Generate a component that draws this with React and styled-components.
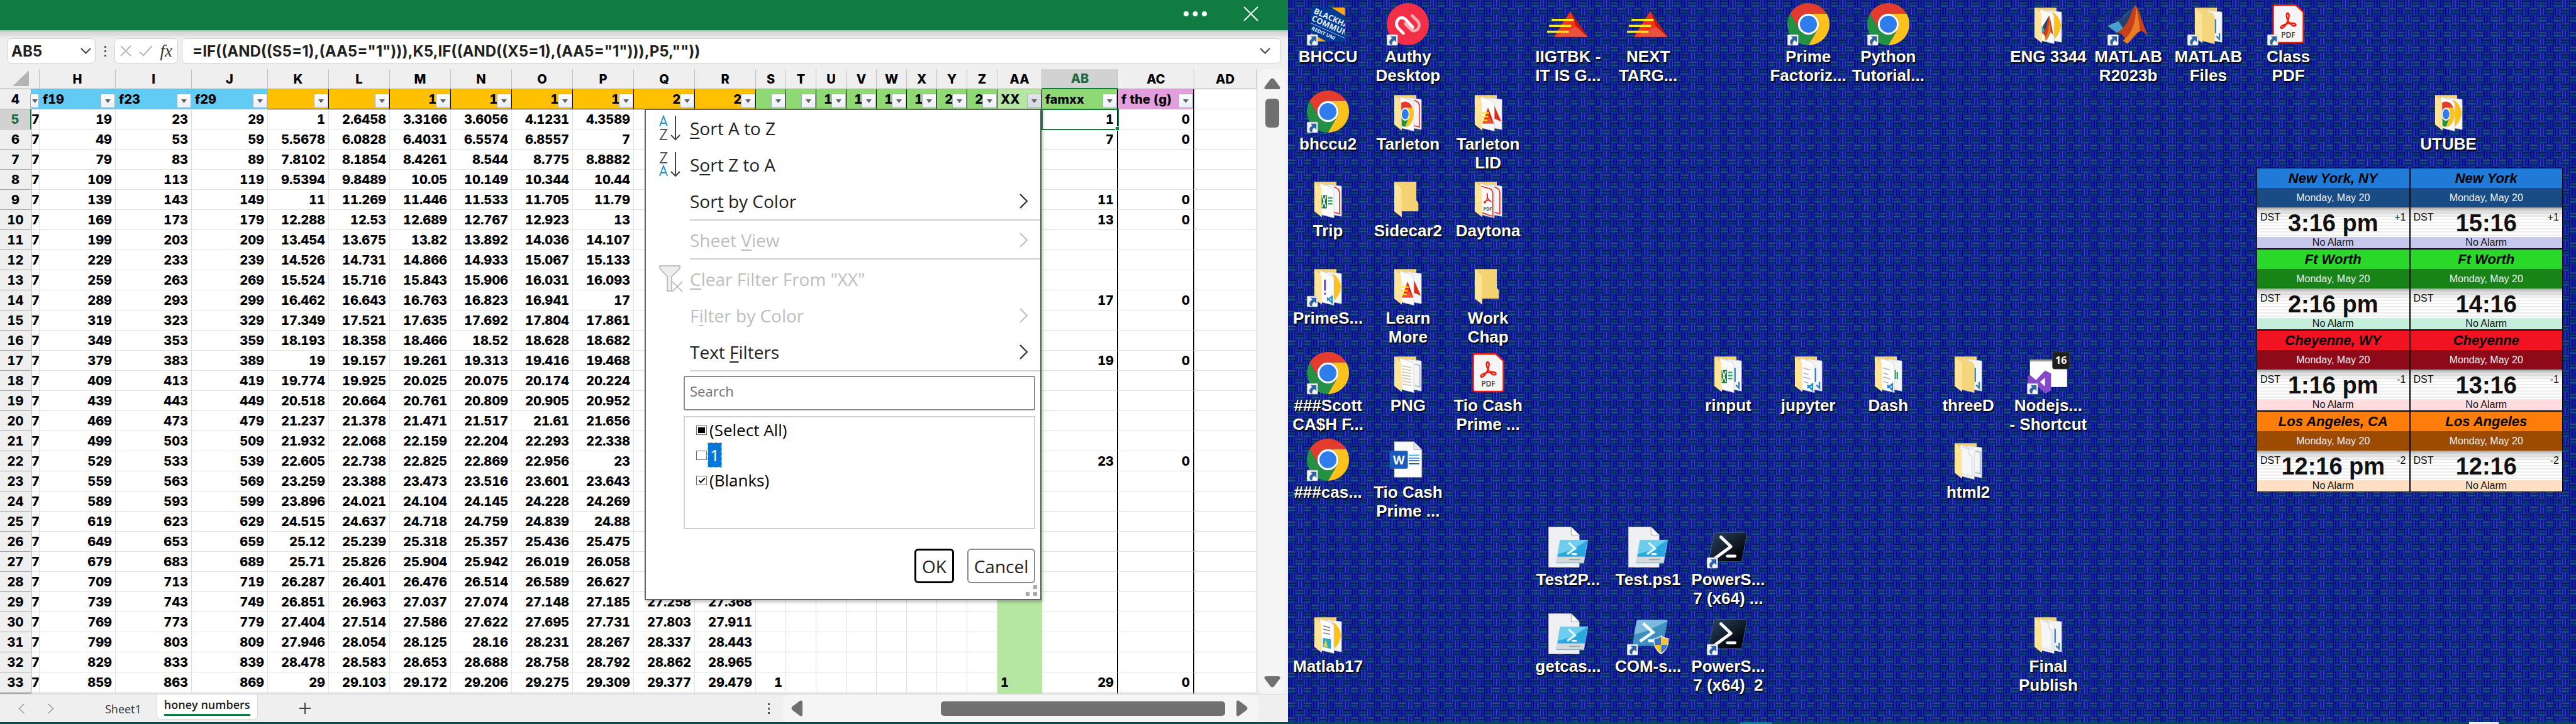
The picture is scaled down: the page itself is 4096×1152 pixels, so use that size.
import React from 'react';
import styled, { createGlobalStyle, css } from 'styled-components';

const UI = '"Open Sans", "Noto Sans", sans-serif';
const SHEET = 'Inter, "Liberation Sans", sans-serif';
const ARIAL = '"Liberation Sans", Arial, sans-serif';

const weave = (() => {
  const lines = [];
  for (let i = 0; i < 5; i += 1) {
    lines.push(`<path d='M${2 + i * 3} 0v15M${17.5 + i * 3} 15v15' stroke='#3264be'/>`);
    lines.push(`<path d='M16 ${1.5 + i * 3}h15M0 ${16.5 + i * 3}h15' stroke='#236eb4'/>`);
  }
  const svg = `<svg xmlns='http://www.w3.org/2000/svg' viewBox='0 0 31 30' width='31' height='30' preserveAspectRatio='none'><rect width='31' height='30' fill='#000084'/><path d='M16 1h14v13h-14zM1 16h14v13h-14z' fill='#001458'/>${lines.join('')}</svg>`;
  return `url("data:image/svg+xml,${encodeURIComponent(svg)}")`;
})();

const GlobalStyle = createGlobalStyle`
  *, *::before, *::after { box-sizing: border-box; }
  body { margin: 0; font-family: ${UI}; }
  button, input { font: inherit; color: inherit; }
  button { padding: 0; border: 0; background: none; }
  input { margin: 0; }
`;

const Screen = styled.div`
  display: flex;
  flex-direction: column;
  min-height: 100vh;
  overflow: hidden;
`;
const Workspace = styled.div`
  display: flex;
  flex: 1;
`;

/* ---------- spreadsheet window ---------- */
const Window = styled.section`
  flex: 0 0 50%;
  min-width: 0;
  display: flex;
  flex-direction: column;
  background: #efefef;
`;
const TitleBar = styled.header`
  height: 48px;
  background: #107c41;
  display: flex;
  align-items: center;
  justify-content: flex-end;
  gap: 58px;
  padding: 0 47px 4px 0;
`;
const PlainButton = styled.button`
  display: flex;
  align-items: center;
  justify-content: center;
`;
const FormulaBar = styled.div`
  height: 62px;
  padding: 11px 11px 9px;
  border-top: 2px solid #8fd3ae;
  background: linear-gradient(#d2d2d2, #efefef 12px);
  display: flex;
  align-items: stretch;
  font: 700 24px ${SHEET};
  color: #222;
`;
const BarBox = styled.div`
  background: #fff;
  border: 1px solid #d0d0d0;
  border-radius: 7px;
  display: flex;
  align-items: center;
  ${(p) => (p.$grow ? 'flex: 1; min-width: 0;' : `width: ${p.$w}px;`)}
  padding: 0 ${(p) => p.$pad || 8}px;
  gap: 12px;
  justify-content: space-between;
`;
const BarInput = styled.input`
  flex: 1;
  min-width: 0;
  border: 0;
  outline: 0;
  background: none;
  padding: 0;
`;
const Dots = styled.div`
  width: 30px;
  display: flex;
  flex-direction: column;
  align-items: center;
  justify-content: center;
  gap: 4px;
  &::before, &::after, & > i { content: ''; width: 3px; height: 3px; background: #555; }
`;
const Gap = styled.div`
  width: 6px;
`;
const Fx = styled.button`
  font: italic 27px "Liberation Serif", serif;
  color: #333;
`;

const Body = styled.div`
  display: flex;
`;
const GridArea = styled.div`
  flex: 1;
  min-width: 0;
`;
const Grid = styled.table`
  width: 100%;
  table-layout: fixed;
  border-collapse: separate;
  border-spacing: 0;
  background: #fff;
  font: 800 20px ${SHEET};
  font-variant-numeric: tabular-nums;
  line-height: 24px;
  color: #000;
`;
const Corner = styled.td`
  height: 32px;
  background: #efefef;
  border-bottom: 1px solid #999;
  padding: 0 4px 2px 0;
  text-align: right;
  svg { display: block; margin-left: auto; }
`;
const ColHead = styled.th`
  height: 32px;
  padding: 0;
  font-weight: 800;
  background: ${(p) => (p.$on ? '#d2d2d2' : '#efefef')};
  color: ${(p) => (p.$on ? '#1e6b42' : '#000')};
  border-right: 1px solid #c0c0c0;
  border-bottom: ${(p) => (p.$on ? '2px solid #107c41' : '1px solid #999')};
`;
const RowHead = styled.th`
  height: ${(p) => p.$h || 32}px;
  padding: 0;
  font-weight: 800;
  background: ${(p) => (p.$on ? '#d2d2d2' : '#efefef')};
  color: ${(p) => (p.$on ? '#1e6b42' : '#000')};
  border-bottom: 1px solid #a6a6a6;
  border-right: ${(p) => (p.$on ? '2px solid #107c41' : '1px solid #999')};
`;
const Cell = styled.td`
  position: relative;
  height: ${(p) => p.$h || 32}px;
  padding: 0 ${(p) => (p.$clip ? 0 : 5)}px;
  text-align: ${(p) => p.$align || 'right'};
  white-space: nowrap;
  ${(p) => p.$clip && 'overflow: hidden;'}
  background: ${(p) => p.$bg || '#fff'};
  border-right: ${(p) => (p.$rule ? '2px solid #000' : `1px solid ${p.$bg || '#e0e0e0'}`)};
  border-bottom: 1px solid ${(p) => p.$bg || '#e0e0e0'};
  ${(p) => p.$dark && css`
    padding-right: 9px;
    border-right: 1px solid #000;
    border-bottom: 1px solid #000;
  `}
  ${(p) => p.$selected && css`
    outline: 2px solid #107c41;
    outline-offset: -1px;
    z-index: 1;
    &::after {
      content: '';
      position: absolute;
      right: -4px;
      bottom: -3px;
      width: 7px;
      height: 7px;
      background: #107c41;
      border: 1px solid #fff;
    }
  `}
`;
const FilterButton = styled.button`
  position: absolute;
  right: 0;
  bottom: 1px;
  width: ${(p) => (p.$narrow ? 14 : 23)}px;
  height: 23px;
  border: 1px solid #a8acb4;
  background: ${(p) => (p.$open ? 'linear-gradient(#e4e6ea, #d4d8e4)' : 'linear-gradient(#fff, #e9edf5)')};
  display: flex;
  align-items: center;
  justify-content: center;
`;

/* ---------- filter menu ---------- */
const Menu = styled.div`
  position: absolute;
  z-index: 5;
  top: 31px;
  right: 0;
  width: 631px;
  background: #fff;
  border: 2px solid #646464;
  box-shadow: 2px 3px 5px rgba(0, 0, 0, 0.25);
  font: 400 28px/36px ${UI};
  text-align: left;
  color: #222;
`;
const Item = styled.button`
  width: 100%;
  height: 58px;
  display: grid;
  grid-template-columns: 70px 1fr 34px;
  align-items: center;
  text-align: left;
  color: ${(p) => (p.disabled ? '#bdbdbd' : '#222')};
  u { text-decoration-thickness: 2px; text-underline-offset: 4px; }
`;
const IconSlot = styled.span`
  display: flex;
  padding-left: 21px;
`;
const Divider = styled.hr`
  margin: 0 0 2px 70px;
  border: 0;
  height: 2px;
  background: #d0d0d0;
`;
const MenuBody = styled.div`
  padding: 5px 8px 25px 60px;
  display: flex;
  flex-direction: column;
`;
const Search = styled.input`
  height: 55px;
  border: 2px solid #8a8a8a;
  border-radius: 3px;
  padding: 0 8px 8px;
  font-size: 22px;
  outline: 0;
  &::placeholder { color: #707070; opacity: 1; }
`;
const Choices = styled.div`
  margin: 9px 0 31px;
  height: 180px;
  border: 2px solid #d0d0d0;
  padding: 0 0 0 18px;
  color: #000;
  font-size: 26px;
`;
const Choice = styled.label`
  height: 40px;
  display: flex;
  align-items: center;
  gap: 2px;
  span {
    line-height: 38px;
    padding: 0 2px;
    ${(p) => p.$hot && 'background: #0078d7; color: #fff; padding: 0 3px; outline: 1px dotted #d67a1c;'}
  }
`;
const Tick = styled.input.attrs({ type: 'checkbox' })`
  appearance: none;
  width: 17px;
  height: 15px;
  border: 1px solid #707070;
  background: #fff;
  display: grid;
  place-items: center;
  &:indeterminate::before { content: ''; width: 11px; height: 9px; background: #000; }
  &:checked::before {
    content: '';
    width: 10px;
    height: 5px;
    border: solid #000;
    border-width: 0 0 2px 2px;
    transform: translateY(-1px) rotate(-45deg);
  }
`;
const Actions = styled.div`
  display: flex;
  justify-content: flex-end;
  gap: 21px;
`;
const Action = styled.button`
  height: 55px;
  width: ${(p) => (p.$primary ? 63 : 108)}px;
  border: ${(p) => (p.$primary ? '3px solid #000' : '2px solid #8a8a8a')};
  border-radius: 6px;
`;
const Grip = styled.svg`
  position: absolute;
  right: 5px;
  bottom: 4px;
`;

/* ---------- scroll bars and tabs ---------- */
const VBar = styled.div`
  width: 43px;
  margin: 0 4px 0 3px;
  border-radius: 10px;
  background: #f5f5f5;
  display: flex;
  flex-direction: column;
  align-items: center;
  padding: 14px 0 10px;
`;
const VThumb = styled.div`
  margin: 15px 0 auto;
  width: 22px;
  height: 46px;
  border-radius: 6px;
  background: #707070;
`;
const Footer = styled.footer`
  flex: 1;
  min-height: 45px;
  display: flex;
  align-items: center;
  border-top: 1px solid #d4d4d4;
  font-size: 18px;
  line-height: 24px;
  color: #333;
`;
const Arrows = styled.div`
  display: flex;
  gap: 35px;
  padding: 0 69px 0 29px;
`;
const Tab = styled.button`
  height: 40px;
  align-self: flex-start;
  padding: 6px 12px 0;
  ${(p) => (p.$on
    ? css`
      background: #fff;
      border: 1px solid #d8d8d8;
      border-top: 0;
      border-radius: 0 0 6px 6px;
      font-weight: 600;
      display: flex;
      flex-direction: column;
      padding: 4px 11px 0;
      color: #222;
      &::after { content: ''; width: 100%; height: 3px; margin-top: 3px; background: #107c41; }
    `
    : css`margin-right: 12px;`)}
`;
const AddTab = styled.button`
  margin: 0 auto 0 66px;
  display: flex;
`;
const HBar = styled.div`
  width: 757px;
  margin: 0 46px 0 8px;
  align-self: stretch;
  border-radius: 10px;
  background: #f5f5f5;
  display: flex;
  align-items: center;
  justify-content: flex-end;
  gap: 18px;
  padding: 0 18px 0 13px;
`;
const HThumb = styled.div`
  margin-left: auto;
  width: 452px;
  height: 23px;
  border-radius: 5px;
  background: #707070;
`;

/* ---------- desktop ---------- */
const Desktop = styled.main`
  flex: 1;
  min-width: 0;
  background: #000080 ${weave} 0 0 / 25px 24px;
  display: grid;
  grid-template-columns: repeat(16, 1fr);
  grid-template-rows: repeat(8, 1fr);
  padding: 0 12px 40px 0;
`;
const Shortcut = styled.button`
  grid-column: ${(p) => p.$c};
  grid-row: ${(p) => p.$r};
  align-self: start;
  min-width: 0;
  height: 0;
  padding: 5px 0 0;
  display: flex;
  flex-direction: column;
  align-items: center;
  gap: 3px;
  font: 700 26px/30px ${ARIAL};
  color: #fff;
  text-shadow: 1px 2px 2px #000, 1px 1px 1px #000;
  svg { flex: none; overflow: visible; text-shadow: none; }
`;
const Line = styled.span`
  display: block;
  white-space: pre;
  text-align: center;
`;
const Clocks = styled.section`
  grid-column: 13 / 17;
  grid-row: 2 / 7;
  justify-self: end;
  align-self: start;
  margin: 128px 9px 0 0;
  width: 487px;
  padding: 1px;
  background: #000;
  display: grid;
  grid-template-columns: 1fr 1fr;
  gap: 2px;
  font: 400 16px/18px ${ARIAL};
  color: #111;
  text-align: center;
`;
const City = styled.h2`
  margin: 0;
  background: ${(p) => p.$bg};
  font: italic 700 22px/31px ${ARIAL};
  color: #000;
`;
const Day = styled.div`
  background: ${(p) => p.$bg};
  color: #f0f0f0;
  line-height: 31px;
`;
const Face = styled.div`
  height: 47px;
  display: grid;
  grid-template-columns: 32px 1fr 32px;
  padding: 7px 5px 0;
  background:
    linear-gradient(rgba(130, 130, 130, 0.8), rgba(170, 170, 170, 0.45) 4px, transparent 17px),
    repeating-linear-gradient(#fff 0 3px, #ededed 3px 5px);
`;
const Hour = styled.strong`
  font-size: 38px;
  line-height: 36px;
  white-space: nowrap;
  justify-self: center;
`;
const Shift = styled.span`
  text-align: right;
`;
const Alarm = styled.div`
  background: ${(p) => p.$bg};
`;

const Taskbar = styled.footer`
  height: 3px;
  background: #004d4d;
  display: grid;
  grid-template-columns: 2767fr 51fr 1108fr 47fr 123fr;
`;
const TaskMark = styled.span`
  grid-column: ${(p) => p.$c};
  background: ${(p) => p.$bg};
`;

/* ---------- drawings ---------- */
const ChromeArt = () => (
  <g>
    <path d="M5.6 21A42 42 0 0 1 78.4 21H42A21 21 0 0 0 23.8 52.5Z" fill="#e33b2e" />
    <path d="M78.4 21A42 42 0 0 1 42 84L60.2 52.5A21 21 0 0 0 42 21Z" fill="#fcc21b" />
    <path d="M42 84A42 42 0 0 1 5.6 21L23.8 52.5A21 21 0 0 0 60.2 52.5Z" fill="#239144" />
    <circle cx="42" cy="42" r="21" fill="#fff" />
    <circle cx="42" cy="42" r="17" fill="#2f7ded" />
  </g>
);
const LinkMark = () => (
  <g>
    <rect x="0.5" y="63" width="21" height="21" rx="1" fill="#f4f6f9" stroke="#b9c0c8" />
    <path d="M7 66h12v12l-4-4c-4 3-5 5-4 9h-3c-5-4-3-10 3-13z" fill="#2f62a3" />
  </g>
);
const LidArt = () => (
  <g>
    <path d="M46.500 16 81 67.500H13.500Z" fill="#f2331c" />
    <path d="M46.500 16 81 67.500 58 47Z" fill="#c01808" />
    <path d="M13.500 67.500 58 47 81 67.500Z" fill="#e8604c" opacity=".7" />
    <path d="M9 33.500h44M4 45.500h44M0 57h43" stroke="#f8ee14" strokeWidth="4.500" />
  </g>
);
const PdfArt = () => (
  <g>
    <path d="M15 4h42l15 14v57q0 4-4 4H16q-4 0-4-4V8q0-4 3-4z" fill="#f6f5f5" stroke="#fb1507" strokeWidth="3" strokeLinejoin="round" />
    <path d="M41 20c-4-1-3 9 1 16s10 11 14 9c4-3-3-6-11-5-9 1-19 6-18 9 2 4 9-3 13-11 4-9 5-17 1-18z" fill="none" stroke="#fb1507" strokeWidth="3" />
    <text x="42" y="69" textAnchor="middle" fontFamily="Open Sans, sans-serif" fontWeight="600" fontSize="15" fill="#333">PDF</text>
  </g>
);
const AuthyArt = () => (
  <g fill="none" strokeWidth="6" strokeLinecap="round">
    <circle cx="42" cy="42" r="42" fill="#f22f46" />
    <path d="M50.500 25 61 35C71 46 58 62 48 52L37 41" stroke="#f9a9b3" />
    <path d="M33 60 23 50C13 39 26 22 37 32L52 48" stroke="#fff" />
  </g>
);
const BankArt = () => (
  <g>
    <clipPath id="bank"><rect x="8" y="8.500" width="68" height="68" rx="3" /></clipPath>
    <g clipPath="url(#bank)">
      <rect x="8" y="8" width="69" height="69" fill="#003a94" />
      <path d="M48 8h29v18zM8 60v17h32z" fill="#f9a61a" />
      <g transform="rotate(24 8 20)" fill="#e8edf7" fontFamily="Open Sans, sans-serif">
        <text x="12" y="18" fontSize="16">BLACKHA</text>
        <text x="14" y="33" fontSize="16">COMMUN</text>
        <path d="M14 38h80" stroke="#c4d0e6" />
        <text x="22" y="50" fontSize="10">REDIT UNI</text>
      </g>
    </g>
  </g>
);
const MatlabArt = () => (
  <g>
    <path d="M0 45 22 36 36 22 56 5 44 34 30 52 18 59Z" fill="#4a9fcf" />
    <path d="M22 36 56 5 48 32 34 55Z" fill="#28406e" />
    <path d="M18 59c12-6 20-16 26-30 4-10 8-22 12-24 8 6 16 44 26 61-8-6-12-12-17-10-8 4-18 22-27 24-3-10-6-20-20-21z" fill="#c7401b" />
    <path d="M56 5c2 20-2 54-26 70 10 6 8 8 12 4 6-8 16-22 23-23-2-18-5-40-9-51z" fill="#f08a24" opacity=".85" />
  </g>
);
const WordArt = () => (
  <g>
    <path d="M15 6h39l16 16v55H15z" fill="#fbfbfb" stroke="#9a9a9a" />
    <path d="M54 6v16h16" fill="#e8e8e8" stroke="#9a9a9a" />
    <path d="M44 33h21M44 39h21" stroke="#41a5ee" strokeWidth="2" />
    <path d="M44 44h21M44 50h21" stroke="#185abd" strokeWidth="2" />
    <rect x="6" y="24" width="36" height="36" rx="3" fill="#185abd" />
    <text x="24" y="51" textAnchor="middle" fontFamily="Open Sans, sans-serif" fontWeight="700" fontSize="24" fill="#fff">W</text>
  </g>
);
const ScriptArt = () => (
  <g>
    <path d="M3 2h45l16 16v64H3z" fill="#f0f0f2" stroke="#cfcfcf" />
    <path d="M48 2v16h16" fill="#fff" stroke="#888" />
    <path d="M26 28h55l-8 46H18z" fill="#29a8e0" stroke="#8fd6f2" />
    <path d="M26 28h55L50 48 21 56z" fill="#7fd5f3" opacity=".8" />
    <path d="M20 61h55l-2 12H18z" fill="#d3d8dc" />
    <path d="M44 67h22" stroke="#9a9fa4" strokeWidth="2" />
    <path d="M43 33 56 45 40 56M49 56h10" fill="none" stroke="#e6f8ff" strokeWidth="4" />
  </g>
);
const ShellArt = () => (
  <g>
    <linearGradient id="shell" x1="0" y1="0" x2="1" y2="1">
      <stop offset="0" stopColor="#2c4564" /><stop offset=".8" stopColor="#03060a" />
    </linearGradient>
    <path d="M18 13h59q3 0 3 3l-10 52q-1 3-4 3H7q-3 0-3-3l10-52q1-3 4-3z" fill="url(#shell)" stroke="#4d6684" />
    <path d="M28 22 48 41 18 63M41 60h15" fill="none" stroke="#fff" strokeWidth="6" strokeLinecap="round" strokeLinejoin="round" />
  </g>
);
const AdminShellArt = () => (
  <g>
    <path d="M22 14h56q3 0 3 3l-9 46q-1 3-4 3H12q-2 0-1-3l8-46q1-3 3-3z" fill="#3f8fc0" />
    <path d="M22 14h56q3 0 3 3L40 36 14 44l5-27q1-3 3-3z" fill="#8cc6e4" opacity=".8" />
    <path d="M32 21 52 39 26 57M42 56h14" fill="none" stroke="#f2fbff" strokeWidth="6" />
    <path d="M68 45q8 6 15 5c1 14-3 25-15 33-12-8-16-19-15-33q8 1 15-5z" fill="#e8e8e8" />
    <path d="M68 48v16H56q-2-6-1-12 7 0 13-4zM68 64h13q-3 10-13 16z" fill="#3b74c4" />
    <path d="M68 48q6 4 13 4 1 6 0 12H68zM56 64h12v16Q58 74 56 64z" fill="#f7c231" />
  </g>
);
const StudioArt = () => (
  <g>
    <rect x="6" y="15" width="74" height="55" fill="#fdfdfd" />
    <rect x="6" y="15" width="74" height="4" fill="#9b9b9b" />
    <rect x="51" y="0" width="34" height="34" rx="4" fill="#1e1e1e" stroke="#444" />
    <text x="68" y="24" textAnchor="middle" fontFamily="Open Sans, sans-serif" fontWeight="700" fontSize="20" fill="#fff">16</text>
    <path d="M1 48 6 46 18 56 36 37 48 43V77L36 83 18 65 6 74 1 71ZM36 51 26 60 36 69Z" fill="#864ac9" fillRule="evenodd" />
  </g>
);

const DOCS = {
  chrome: <g transform="translate(20 22) scale(.4 .6)"><ChromeArt /></g>,
  pdf: (
    <g fill="none" stroke="#e8251d" strokeWidth="2">
      <path d="M28 18 48 24 51 30V78L30 71" />
      <path d="M40 32c-2 8 3 15 8 17M33 52c4-1 9-10 7-20M33 50q7-6 14-3" />
      <text x="32" y="66" fontFamily="Open Sans, sans-serif" fontSize="9" fill="#333" stroke="none">PDF</text>
    </g>
  ),
  lid: <g transform="translate(26 24) scale(.33 .62)"><LidArt /></g>,
  sheet: (
    <g>
      <rect x="27" y="36" width="13" height="26" fill="#107c41" />
      <path d="M42 41h9M42 47h9M42 53h9" stroke="#33a667" strokeWidth="3" />
      <path d="M30 35 38 60M38 38 30 60" stroke="#fff" strokeWidth="2" />
    </g>
  ),
  code: (
    <g>
      <path d="M36 30v22M36 56v4" stroke="#6f4fc4" strokeWidth="4" />
      <path d="M40 66 50 76V64L40 72" fill="none" stroke="#1f8ad2" strokeWidth="3" />
    </g>
  ),
  text: (
    <g>
      <path d="M32 32 46 36M32 42 42 45M32 50 46 54M32 59 42 62" stroke="#aab4bd" strokeWidth="2" />
      <path d="M40 66 50 76V64L40 72" fill="none" stroke="#1f8ad2" strokeWidth="3" />
    </g>
  ),
  page: <path d="M30 17 44 20V32L50 34V76L30 70" fill="#f4f6f9" stroke="#b8bdc9" />,
  photo: <path d="M31 28 49 31M31 34 49 37M31 40 49 43M31 46 49 49M31 52 49 55M31 58 49 61M31 64 49 67" stroke="#c9b98c" strokeWidth="2" strokeDasharray="3 1" />,
  matlab: <g transform="translate(24 22) scale(.36 .66)"><MatlabArt /></g>,
  plot: (
    <g>
      <path d="M33 26 46 30M33 33 46 36M33 40 46 43" stroke="#777" strokeWidth="2" />
      <path d="M32 50 48 53V72L32 68Z" fill="#2aa8c8" />
      <path d="M33 66 38 54 42 70Z" fill="#f2d13c" />
    </g>
  ),
  folder: <path d="M25 11 50 20 54 26V81L26 74Z" fill="#f5d67c" />,
};
const BACKS = {
  red: <path d="M54 19 63 24 65 30V73L54 70" fill="none" stroke="#e8251d" strokeWidth="2" />,
  chrome: <path d="M51 18q14 8 17 26-3 22-17 30z" fill="#fcc21b" />,
  lid: <path d="M54 30 68 62 54 56Z" fill="#e02c14" />,
  blue: <path d="M56 32v28M58 66 64 72V60" fill="none" stroke="#2c7fb8" strokeWidth="3" />,
  grey: <path d="M56 24 66 27V70L56 67" fill="none" stroke="#9fb3c0" strokeWidth="2" />,
  green: <path d="M56 36v18M60 40v14" stroke="#3a9c6a" strokeWidth="3" />,
};
const FolderArt = ({ front, back }) => (
  <g>
    <path d="M15 9H59V46L63 51V68H28Z" fill="#f5d272" />
    {back && <path d="M40 14 69 18V78L48 74Z" fill="#f3f4f6" stroke="#c9ccd2" />}
    {back && BACKS[back]}
    {front && <path d="M26 12 50 20 54 26V81L26 74Z" fill="#fbfbfc" stroke="#c9ccd2" />}
    {front && DOCS[front]}
    <path d="M15 9 29 22 30 80 15 68Z" fill="#ffe49a" />
  </g>
);

const ART = {
  chrome: ChromeArt, lid: LidArt, pdf: PdfArt, authy: AuthyArt, bank: BankArt, matlab: MatlabArt,
  word: WordArt, script: ScriptArt, shell: ShellArt, admin: AdminShellArt, studio: StudioArt, folder: FolderArt,
};

const SHORTCUTS = [
  { c: 1, r: 1, art: 'bank', link: true, label: ['BHCCU'] },
  { c: 2, r: 1, art: 'authy', link: true, label: ['Authy', 'Desktop'] },
  { c: 4, r: 1, art: 'lid', label: ['IIGTBK -', 'IT IS G...'] },
  { c: 5, r: 1, art: 'lid', label: ['NEXT', 'TARG...'] },
  { c: 7, r: 1, art: 'chrome', link: true, label: ['Prime', 'Factoriz...'] },
  { c: 8, r: 1, art: 'chrome', link: true, label: ['Python', 'Tutorial...'] },
  { c: 10, r: 1, art: 'folder', front: 'matlab', back: 'chrome', label: ['ENG 3344'] },
  { c: 11, r: 1, art: 'matlab', link: true, label: ['MATLAB', 'R2023b'] },
  { c: 12, r: 1, art: 'folder', front: 'folder', back: 'blue', link: true, label: ['MATLAB', 'Files'] },
  { c: 13, r: 1, art: 'pdf', link: true, label: ['Class', 'PDF'] },
  { c: 1, r: 2, art: 'chrome', link: true, label: ['bhccu2'] },
  { c: 2, r: 2, art: 'folder', front: 'chrome', back: 'red', label: ['Tarleton'] },
  { c: 3, r: 2, art: 'folder', front: 'lid', back: 'lid', label: ['Tarleton', 'LID'] },
  { c: 15, r: 2, art: 'folder', front: 'chrome', back: 'chrome', label: ['UTUBE'] },
  { c: 1, r: 3, art: 'folder', front: 'sheet', back: 'red', label: ['Trip'] },
  { c: 2, r: 3, art: 'folder', label: ['Sidecar2'] },
  { c: 3, r: 3, art: 'folder', front: 'pdf', back: 'red', label: ['Daytona'] },
  { c: 1, r: 4, art: 'folder', front: 'code', back: 'chrome', link: true, label: ['PrimeS...'] },
  { c: 2, r: 4, art: 'folder', front: 'lid', back: 'lid', label: ['Learn', 'More'] },
  { c: 3, r: 4, art: 'folder', label: ['Work', 'Chap'] },
  { c: 1, r: 5, art: 'chrome', link: true, label: ['###Scott', 'CA$H F...'] },
  { c: 2, r: 5, art: 'folder', front: 'photo', back: 'grey', label: ['PNG'] },
  { c: 3, r: 5, art: 'pdf', label: ['Tio Cash', 'Prime ...'] },
  { c: 6, r: 5, art: 'folder', front: 'sheet', back: 'blue', label: ['rinput'] },
  { c: 7, r: 5, art: 'folder', front: 'text', back: 'blue', label: ['jupyter'] },
  { c: 8, r: 5, art: 'folder', front: 'text', back: 'green', label: ['Dash'] },
  { c: 9, r: 5, art: 'folder', front: 'folder', back: 'blue', label: ['threeD'] },
  { c: 10, r: 5, art: 'studio', link: true, label: ['Nodejs...', '- Shortcut'] },
  { c: 1, r: 6, art: 'chrome', link: true, label: ['###cas...'] },
  { c: 2, r: 6, art: 'word', label: ['Tio Cash', 'Prime ...'] },
  { c: 9, r: 6, art: 'folder', front: 'page', back: 'grey', label: ['html2'] },
  { c: 4, r: 7, art: 'script', label: ['Test2P...'] },
  { c: 5, r: 7, art: 'script', label: ['Test.ps1'] },
  { c: 6, r: 7, art: 'shell', link: true, label: ['PowerS...', '7 (x64) ...'] },
  { c: 1, r: 8, art: 'folder', front: 'plot', back: 'chrome', label: ['Matlab17'] },
  { c: 4, r: 8, art: 'script', label: ['getcas...'] },
  { c: 5, r: 8, art: 'admin', link: true, label: ['COM-s...'] },
  { c: 6, r: 8, art: 'shell', link: true, label: ['PowerS...', '7 (x64)  2'] },
  { c: 10, r: 8, art: 'folder', front: 'page', back: 'blue', label: ['Final', 'Publish'] },
];

const ZONES = [
  { a: 'New York, NY', b: 'New York', t12: '3:16 pm', t24: '15:16', shift: '+1', c: ['#1f7ad8', '#194b84', '#c8c8ee'] },
  { a: 'Ft Worth', b: 'Ft Worth', t12: '2:16 pm', t24: '14:16', shift: '', c: ['#29d829', '#188418', '#c5efdb'] },
  { a: 'Cheyenne, WY', b: 'Cheyenne', t12: '1:16 pm', t24: '13:16', shift: '-1', c: ['#f21322', '#8f0a18', '#ffdce0'] },
  { a: 'Los Angeles, CA', b: 'Los Angeles', t12: '12:16 pm', t24: '12:16', shift: '-2', c: ['#ff7d08', '#9c4b00', '#ffe0c4'] },
];

/* ---------- sheet data ---------- */
const CYAN = '#61cbf3';
const GOLD = '#ffc000';
const GREEN = '#8ed973';
const PALE = '#b5e6a2';
const PINK = '#e49edd';
const ROOTS = [1, 7, 11, 13, 17, 19, 23, 29];
const HEADS = ['', '', '11', '13', '17', '19', '23', '29'];
const MENU_END_ROW = 28;

const COLUMNS = [
  { id: '', w: 13, bg: CYAN, head: '', narrow: true },
  { id: 'H', w: 121, bg: CYAN, head: 'f19', left: true },
  { id: 'I', w: 121, bg: CYAN, head: 'f23', left: true },
  { id: 'J', w: 121, bg: CYAN, head: 'f29', left: true },
  ...'KLMNOPQR'.split('').map((id, i) => ({ id, w: 97, bg: GOLD, head: HEADS[i], dark: true })),
  ...'STUVWXYZ'.split('').map((id, i) => ({ id, w: 48, bg: GREEN, head: HEADS[i], dark: true })),
  { id: 'AA', w: 71, bg: PALE, head: 'XX', left: true, dark: true },
  { id: 'AB', w: 121, bg: GREEN, head: 'famxx', left: true, rule: true },
  { id: 'AC', w: 121, bg: PINK, head: 'f the (g)', left: true, rule: true },
  { id: 'AD', w: null, head: null },
];

const valueAt = (id, row) => {
  const base = 30 * (row - 5);
  if (id === '') return '7';
  if (id === 'H') return 19 + base;
  if (id === 'I') return 23 + base;
  if (id === 'J') return 29 + base;
  // Cells that lie behind the open filter menu stay unrendered.
  if ((id === 'Q' || id === 'R') && row <= MENU_END_ROW) return '';
  const k = 'KLMNOPQR'.indexOf(id);
  if (k >= 0) return String(Number(Math.sqrt(ROOTS[k] + base).toPrecision(5)));
  const whole = ROOTS.map((n) => Math.sqrt(n + base)).find((n) => Number.isInteger(n));
  if (id === 'AB') return whole ?? '';
  if (id === 'AC') return whole ? 0 : '';
  if (row === 33 && (id === 'S' || id === 'AA')) return '1';
  return '';
};

const Chevron = ({ color = '#222', w = 15, h = 24, dir = 'right' }) => (
  <svg width={w} height={h} viewBox="0 0 15 24" preserveAspectRatio="none" fill="none" stroke={color} strokeWidth="2">
    <path d={dir === 'right' ? 'M2 1 13 12 2 23' : 'M13 1 2 12 13 23'} />
  </svg>
);
const DownChevron = () => (
  <svg width="17" height="10" viewBox="0 0 17 10" fill="none" stroke="#444" strokeWidth="2"><path d="M1 1 8.500 8.500 16 1" /></svg>
);
const SortIcon = ({ flip }) => (
  <svg width="34" height="42" viewBox="0 0 34 42" fill="none" strokeWidth="2">
    <g transform={flip ? 'translate(0 21)' : undefined}><path d="M1 18 7 2 13 18M3 13h8" stroke="#2a93d8" /></g>
    <g transform={flip ? 'translate(0 -21)' : undefined}><path d="M2 23h10L2 39h11" stroke="#555" /></g>
    <path d="M26 1v38M19 32l7 7 7-7" stroke="#444" />
  </svg>
);
const ClearIcon = () => (
  <svg width="38" height="44" viewBox="0 0 38 44" strokeWidth="1.500" stroke="#b0b0b0" fill="#eee">
    <path d="M1 1h32v4L20 18v23h-7V18L1 5z" /><path d="M21 26 37 42M37 26 21 42" fill="none" />
  </svg>
);

const FilterMenu = () => (
  <Menu>
    <Item><IconSlot><SortIcon /></IconSlot><span><u>S</u>ort A to Z</span></Item>
    <Item><IconSlot><SortIcon flip /></IconSlot><span>S<u>o</u>rt Z to A</span></Item>
    <Item><i /><span>Sor<u>t</u> by Color</span><Chevron /></Item>
    <Divider />
    <Item disabled><i /><span>Sheet <u>V</u>iew</span><Chevron color="#bdbdbd" /></Item>
    <Divider />
    <Item disabled><IconSlot><ClearIcon /></IconSlot><span><u>C</u>lear Filter From "XX"</span></Item>
    <Item disabled><i /><span>F<u>i</u>lter by Color</span><Chevron color="#bdbdbd" /></Item>
    <Item><i /><span>Text <u>F</u>ilters</span><Chevron /></Item>
    <Divider />
    <MenuBody>
      <Search aria-label="Search" placeholder="Search" />
      <Choices>
        <Choice><Tick ref={(el) => { if (el) el.indeterminate = true; }} /><span>(Select All)</span></Choice>
        <Choice $hot><Tick /><span>1</span></Choice>
        <Choice><Tick defaultChecked /><span>(Blanks)</span></Choice>
      </Choices>
      <Actions>
        <Action $primary>OK</Action>
        <Action>Cancel</Action>
      </Actions>
    </MenuBody>
    <Grip width="18" height="18" viewBox="0 0 18 18" fill="#a8a8a8"><path d="M12 0h6v6h-6zM12 11h6v6h-6zM0 11h6v6H0z" /></Grip>
  </Menu>
);

const Spreadsheet = () => (
  <Grid>
    <colgroup>
      <col style={{ width: 50 }} />
      {COLUMNS.map((c) => <col key={c.id} style={c.w ? { width: c.w } : undefined} />)}
    </colgroup>
    <thead>
      <tr>
        <Corner><svg width="26" height="25" viewBox="0 0 26 25"><path d="M26 0v25H0z" fill="#b4b4b4" /></svg></Corner>
        {COLUMNS.map((c) => <ColHead key={c.id} scope="col" $on={c.id === 'AB'}>{c.id}</ColHead>)}
      </tr>
    </thead>
    <tbody>
      <tr>
        <RowHead scope="row">4</RowHead>
        {COLUMNS.map((c) => (
          <Cell key={c.id} $bg={c.bg} $align={c.left ? 'left' : 'right'} $dark={c.dark} $rule={c.rule}>
            {c.head}
            {c.head !== null && (
              <FilterButton aria-label={`Filter ${c.id}`} $narrow={c.narrow} $open={c.id === 'AA'}>
                <svg width="9" height="6" viewBox="0 0 9 6"><path d="M0 0h9L4.500 6z" fill="#606060" /></svg>
              </FilterButton>
            )}
            {c.id === 'AA' && <FilterMenu />}
          </Cell>
        ))}
      </tr>
      {Array.from({ length: 29 }, (_, i) => i + 5).map((row) => (
        <tr key={row}>
          <RowHead scope="row" $on={row === 5}>{row}</RowHead>
          {COLUMNS.map((c) => (
            <Cell
              key={c.id}
              $clip={c.narrow}
              $align={c.narrow || c.id === 'AA' ? 'left' : 'right'}
              $bg={c.id === 'AA' ? PALE : undefined}
              $rule={c.rule}
              $selected={c.id === 'AB' && row === 5}
            >
              {valueAt(c.id, row)}
            </Cell>
          ))}
        </tr>
      ))}
      <tr>
        <RowHead $h={2} />
        {COLUMNS.map((c) => <Cell key={c.id} $h={2} $bg={c.id === 'AA' ? PALE : undefined} $rule={c.rule} />)}
      </tr>
    </tbody>
  </Grid>
);

const Zone = ({ city, time, zone }) => (
  <article>
    <City $bg={zone.c[0]}>{city}</City>
    <Day $bg={zone.c[1]}>Monday, May 20</Day>
    <Face><span>DST</span><Hour>{time}</Hour><Shift>{zone.shift}</Shift></Face>
    <Alarm $bg={zone.c[2]}>No Alarm</Alarm>
  </article>
);

export default function App() {
  return (
    <Screen>
      <GlobalStyle />
      <Workspace>
        <Window>
          <TitleBar>
            <PlainButton aria-label="More">
              <svg width="37" height="8" viewBox="0 0 37 8" fill="#fff"><circle cx="4" cy="4" r="4" /><circle cx="18.500" cy="4" r="4" /><circle cx="33" cy="4" r="4" /></svg>
            </PlainButton>
            <PlainButton aria-label="Close">
              <svg width="24" height="24" viewBox="0 0 24 24" stroke="#fff" strokeWidth="2"><path d="M1 1 23 23M23 1 1 23" /></svg>
            </PlainButton>
          </TitleBar>
          <FormulaBar>
            <BarBox $w={141} $pad={6}>
              <BarInput aria-label="Name box" defaultValue="AB5" />
              <PlainButton aria-label="Names"><DownChevron /></PlainButton>
            </BarBox>
            <Dots><i /></Dots>
            <BarBox $w={101}>
              <svg width="20" height="20" viewBox="0 0 20 20" stroke="#b0b0b0" strokeWidth="2"><path d="M1 1 19 19M19 1 1 19" /></svg>
              <svg width="24" height="20" viewBox="0 0 24 20" fill="none" stroke="#b0b0b0" strokeWidth="2"><path d="M1 12 8 18 23 1" /></svg>
              <Fx aria-label="Insert function">fx</Fx>
            </BarBox>
            <Gap />
            <BarBox $grow $pad={16}>
              <BarInput aria-label="Formula" defaultValue={'=IF((AND((S5=1),(AA5="1"))),K5,IF((AND((X5=1),(AA5="1"))),P5,""))'} />
              <PlainButton aria-label="Expand"><DownChevron /></PlainButton>
            </BarBox>
          </FormulaBar>
          <Body>
            <GridArea><Spreadsheet /></GridArea>
            <VBar>
              <svg width="26" height="18" viewBox="0 0 26 18" fill="#707070"><path d="M10 2q3-3 6 0l9 12q2 4-3 4H4q-5 0-3-4z" /></svg>
              <VThumb />
              <svg width="26" height="18" viewBox="0 0 26 18" fill="#707070"><path d="M10 16q3 3 6 0l9-12q2-4-3-4H4q-5 0-3 4z" /></svg>
            </VBar>
          </Body>
          <Footer>
            <Arrows><Chevron color="#9a9a9a" w={11} h={17} dir="left" /><Chevron color="#9a9a9a" w={11} h={17} /></Arrows>
            <Tab>Sheet1</Tab>
            <Tab $on>honey numbers</Tab>
            <AddTab aria-label="New sheet"><svg width="18" height="18" viewBox="0 0 18 18" stroke="#444" strokeWidth="2"><path d="M9 0v18M0 9h18" /></svg></AddTab>
            <Dots><i /></Dots>
            <HBar>
              <svg width="18" height="26" viewBox="0 0 18 26" fill="#707070"><path d="M2 10q-3 3 0 6l12 9q4 2 4-3V4q0-5-4-3z" /></svg>
              <HThumb />
              <svg width="18" height="26" viewBox="0 0 18 26" fill="#707070"><path d="M16 10q3 3 0 6L4 25q-4 2-4-3V4q0-5 4-3z" /></svg>
            </HBar>
          </Footer>
        </Window>
        <Desktop>
          {SHORTCUTS.map((s) => {
            const Art = ART[s.art];
            return (
              <Shortcut key={`${s.c}-${s.r}`} $c={s.c} $r={s.r}>
                <svg width="67" height="67" viewBox="0 0 84 84">
                  <Art front={s.front} back={s.back} />
                  {s.link && <LinkMark />}
                </svg>
                <span>{s.label.map((text) => <Line key={text}>{text}</Line>)}</span>
              </Shortcut>
            );
          })}
          <Clocks>
            {ZONES.map((z) => (
              <React.Fragment key={z.a}>
                <Zone city={z.a} time={z.t12} zone={z} />
                <Zone city={z.b} time={z.t24} zone={z} />
              </React.Fragment>
            ))}
          </Clocks>
        </Desktop>
      </Workspace>
      <Taskbar><TaskMark $c={2} $bg="#008484" /><TaskMark $c={4} $bg="#efefef" /></Taskbar>
    </Screen>
  );
}
